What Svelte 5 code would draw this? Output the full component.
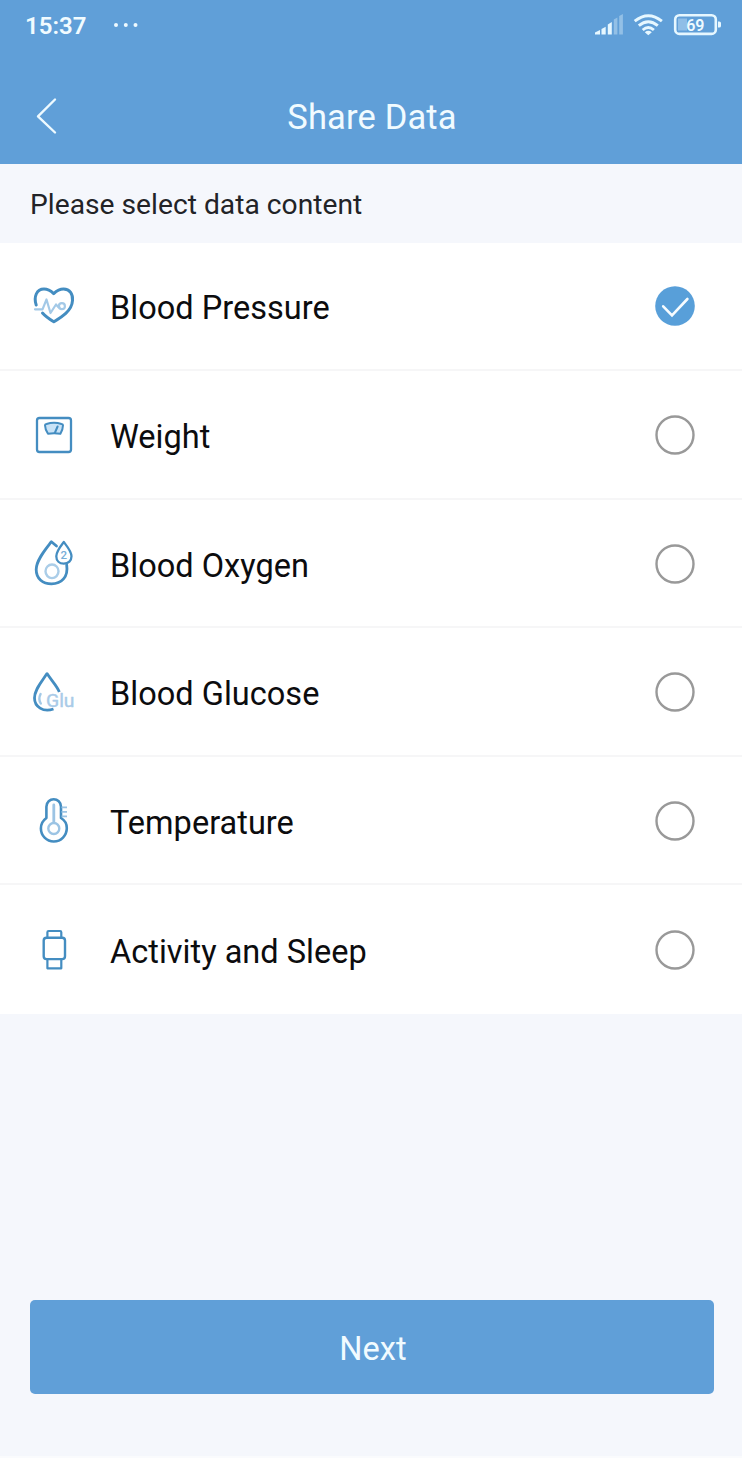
<script>
  const items = [
    { id: 'pressure', label: 'Blood Pressure' },
    { id: 'weight', label: 'Weight' },
    { id: 'oxygen', label: 'Blood Oxygen' },
    { id: 'glucose', label: 'Blood Glucose' },
    { id: 'temperature', label: 'Temperature' },
    { id: 'activity', label: 'Activity and Sleep' }
  ];
  let selected = $state('pressure');
</script>

<div class="screen">
  <header>
    <div class="status">
      <span class="time">15:37</span>
      <svg class="dots" width="26" height="6" viewBox="0 0 26 6" fill="#eefaff">
        <circle cx="4" cy="3" r="2" /><circle cx="13.8" cy="3" r="2" /><circle cx="23.5" cy="3" r="2" />
      </svg>
      <svg class="system" width="130" height="30" viewBox="592 10 130 30" fill="none">
        <g fill="#e6f7ff">
          <path d="M595 34.5V32.5L600 30V34.5Z" />
          <path d="M601.5 34.5V29L605.7 26.7V34.5Z" />
          <path d="M607.8 34.5V24.5L611.8 22V34.5Z" />
          <g opacity=".38">
            <path d="M613.8 34.5V19.5L617.4 17.4V34.5Z" />
            <path d="M619.2 34.5V16L622.9 14V34.5Z" />
          </g>
        </g>
        <g stroke="#e6f7ff" stroke-width="2.9">
          <path d="M634.7 21.2Q648.3 10.2 661.9 21.2" />
          <path d="M638.8 25.7Q648.3 17.7 657.8 25.7" />
          <path d="M642.7 30Q648.3 25.2 653.9 30" />
        </g>
        <path d="M644.8 32.2Q648.3 29.3 651.8 32.2L648.3 35.3Z" fill="#e6f7ff" />
        <rect x="678" y="18.5" width="9" height="12" fill="#8fbee7" />
        <rect x="675.2" y="15.3" width="40.6" height="18.6" rx="4.2" stroke="#e6f7ff" stroke-width="2.6" />
        <path d="M718 21.5h1.2q1.8 0 1.8 1.5v3q0 1.5-1.8 1.5H718Z" fill="#e6f7ff" />
        <text x="695.3" y="31" text-anchor="middle" font-family="Roboto, sans-serif" font-size="16" font-weight="600" fill="#eefaff">69</text>
      </svg>
    </div>
    <div class="bar">
      <button class="back" aria-label="Back">
        <svg width="24" height="38" viewBox="0 0 24 38" fill="none" stroke="#eefaff" stroke-width="2.4" stroke-linecap="round" stroke-linejoin="round">
          <path d="M21 2.5L4 19.3L21 35.5" />
        </svg>
      </button>
      <h1>Share Data</h1>
    </div>
  </header>

  <p class="prompt">Please select data content</p>

  <ul>
    {#each items as item (item.id)}
      <li>
        <button class="row" onclick={() => (selected = item.id)}>
          <svg class="icon" width="48" height="56" viewBox="0 0 48 56" fill="none" stroke="#448dc1" stroke-width="2.5" stroke-linecap="round" stroke-linejoin="round">
            {#if item.id === 'pressure'}
              <path stroke-width="3" d="M6.2 27C3.5 19 6.5 11 14 11C18.5 11 21 13 23.7 15.6C27 12.5 29 11 33.5 11C40 11 43 16 42.5 22.5C42 33 31 39.5 23.8 43.8C19.5 41.2 15.5 38.4 12.5 35" />
              <g stroke="#a3c9e7" stroke-width="2.2"><path d="M5 31.3H12.5L16.5 21.5L20.5 35L26 26.5L28.5 29.4H29.5" /><circle cx="31.9" cy="28.2" r="3" /></g>
            {:else if item.id === 'weight'}
              <rect x="7" y="11" width="34" height="34" rx="2.5" stroke-width="2.3" />
              <path d="M15 18.2Q15 17.3 16.5 17Q24 14.6 31.5 17Q33 17.3 33 18.2Q33 22 30.4 26.8Q24 25.8 18 26.8Q15 22 15 18.2Z" fill="#c9e3f7" stroke-width="2" />
              <path d="M24.8 26L27.6 19.5" stroke-width="2" />
            {:else if item.id === 'oxygen'}
              <path stroke-width="2.8" d="M26.5 10L21.4 5.7C15.8 13 6.2 24 6.2 33.5C6.2 43 13 47.9 21.5 47.9C31.5 47.9 38.5 41 36.7 29" />
              <path stroke-width="2.3" d="M33.8 6C30 11 26.3 15.5 26.3 20.2C26.3 25 29.5 27.7 33.8 27.7C38.4 27.7 41.5 24.5 41.5 20.2C41.5 15.5 37.6 11 33.8 6Z" />
              <ellipse cx="22" cy="35.3" rx="6.5" ry="6.8" stroke="#aacde8" stroke-width="2.4" />
              <text x="33.8" y="22.8" text-anchor="middle" font-size="11.5" font-weight="500" stroke="none" fill="#78aed8">2</text>
            {:else if item.id === 'glucose'}
              <path stroke-width="2.8" stroke-linecap="butt" d="M29.3 28C27.5 22.5 21.5 16.5 17 9.6C11.5 18 4.5 25.5 4.5 34C4.5 42.5 13 48.8 23.5 45" />
              <path stroke="#a3c9e7" stroke-width="2.4" d="M10.6 30Q8 34.8 10.8 39.5" />
              <text x="16" y="43" font-size="18.5" stroke="#a9cbe8" stroke-width=".4" fill="#a9cbe8" textLength="28.5" lengthAdjust="spacingAndGlyphs">Glu</text>
            {:else if item.id === 'temperature'}
              <path stroke-width="2.6" d="M16.4 25V13.8C16.4 3.8 31 3.8 31 13.8V25C36 28 36.8 31.5 36.8 35C36.8 42.5 31 48.5 23.8 48.5C16.5 48.5 10.9 42.5 10.9 35.5C10.9 31 12.8 27.5 16.4 25Z" />
              <g stroke="#9cc4e4" stroke-width="2.4"><circle cx="23.8" cy="35.5" r="5.5" /><path stroke-width="2.8" d="M23.8 29.5V12" /><path stroke-width="1.7" stroke-linecap="butt" d="M31.5 14.3H37M31.5 18.8H37M31.5 23.3H37" /></g>
            {:else}
              <rect x="13.7" y="15.8" width="21.3" height="21.3" rx="2.8" stroke-width="2.4" />
              <path stroke-width="2.2" d="M17.4 15.5V10.3Q17.4 9 18.7 9H30Q31.3 9 31.3 10.3V15.5M17.4 37.5V46.3H31.3V37.5" />
            {/if}
          </svg>
          <span class="label">{item.label}</span>
          <svg class="radio" width="42" height="42" viewBox="0 0 42 42" fill="none">
            {#if selected === item.id}
              <circle cx="21" cy="21" r="19.8" fill="#589fd9" />
              <path d="M9.2 21.3L18 30.3L33.4 14" stroke="#f7fcff" stroke-width="2.6" stroke-linecap="round" />
            {:else}
              <circle cx="21" cy="21" r="18.5" stroke="#999" stroke-width="2.4" />
            {/if}
          </svg>
        </button>
      </li>
    {/each}
  </ul>

  <footer><button class="next">Next</button></footer>
</div>

<style>
  :global(body) { background: #f5f7fc; }
  .screen {
    box-sizing: border-box; height: 1458px; display: flex; flex-direction: column;
    background: #f5f7fc; border-bottom: 2px solid #fafbfd;
    font-family: Roboto, sans-serif; color: #0c0c0e;
  }
  button { font: inherit; color: inherit; border: 0; margin: 0; padding: 0; background: none; }
  header { height: 163.5px; flex: none; background: #609fd8; color: #f1fbff; }
  .status { height: 50px; display: flex; align-items: center; padding: 0 20px 0 25px; }
  .time { font-size: 24px; font-weight: 600; width: 87px; padding-top: 1px; }
  .system { margin-left: auto; }
  .bar { height: 134px; margin-top: -1px; display: grid; grid-template-columns: 60px 1fr 60px; align-items: center; }
  .back { margin-left: 34px; height: 38px; width: 24px; }
  .back svg { display: block; }
  h1 { margin: 0; padding: 2px 0 0 2px; font-size: 34.5px; font-weight: 400; letter-spacing: .15px; text-align: center; }
  .prompt { margin: 0; height: 79px; flex: none; display: flex; align-items: center; padding: 2px 0 0 30px; box-sizing: border-box; font-size: 28.2px; letter-spacing: .02px; color: #222327; }
  ul { list-style: none; margin: 0; padding: 0; display: grid; grid-auto-rows: 128.5px; flex: none; background: #fff; }
  li { border-bottom: 2px solid #f6f6f7; box-sizing: border-box; }
  li + li { padding-top: 2px; }
  li:last-child { border: 0; }
  .row { width: 100%; height: 100%; display: flex; align-items: center; padding: 0 46px 0 30px; text-align: left; }
  .icon { margin-right: 32px; flex: none; }
  .label { flex: 1; font-size: 32.5px; letter-spacing: .02px; padding-top: 4px; }
  footer { margin-top: auto; padding: 0 28px 62px 30px; }
  .next { display: block; width: 100%; height: 94.5px; padding: 4px 0 0 2px; border-radius: 5px; background: #609fd8; color: #f1fbff; font-size: 32.5px; letter-spacing: .1px; }
</style>
